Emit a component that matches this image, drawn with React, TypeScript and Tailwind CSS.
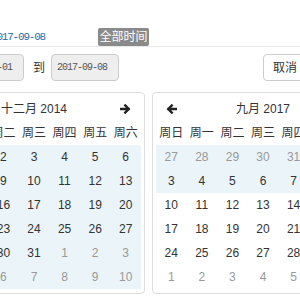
import React from 'react';

type Day = { d: number; off?: boolean; range?: boolean };

const weekdays = ['周日', '周一', '周二', '周三', '周四', '周五', '周六'];

function buildWeeks(start: number[], rangeRows: number): Day[][] {
  // start: list of 42 day numbers, off-month flagged by position
  const weeks: Day[][] = [];
  for (let r = 0; r < 6; r++) {
    weeks.push(start.slice(r * 7, r * 7 + 7).map(d => ({ d, range: r < rangeRows })));
  }
  return weeks;
}

function Arrow({ dir }: { dir: 'left' | 'right' }) {
  return (
    <svg width="11" height="10" viewBox="0 0 11 10" className={dir === 'left' ? 'rotate-180' : ''}>
      <path d="M1 5 H8.6 M5.2 1.4 L8.8 5 L5.2 8.6" stroke="#222" strokeWidth="2.3" fill="none" strokeLinecap="square" />
    </svg>
  );
}

function Calendar({ title, weeks, prev, next, offCheck }: {
  title: string;
  weeks: Day[][];
  prev?: boolean;
  next?: boolean;
  offCheck: (row: number, d: number) => boolean;
}) {
  return (
    <div className="shrink-0 w-[222px] border border-[#ddd] rounded px-[3px] py-[4px]">
      <div className="grid grid-cols-7">
        <div className="h-6 flex items-center justify-center">{prev && <Arrow dir="left" />}</div>
        <div className="col-span-5 h-6 flex items-center justify-center text-[#333]">{title}</div>
        <div className="h-6 flex items-center justify-center">{next && <Arrow dir="right" />}</div>
        {weekdays.map(w => (
          <div key={w} className="h-6 flex items-center justify-center text-[#333]">{w}</div>
        ))}
        {weeks.map((week, r) =>
          week.map((day, i) => (
            <div
              key={`${r}-${i}`}
              className={`h-6 flex items-center justify-center ${day.range ? 'bg-[#ebf4f8]' : ''} ${
                offCheck(r, day.d) ? 'text-[#999]' : 'text-[#333]'
              }`}
            >
              {day.d}
            </div>
          ))
        )}
      </div>
    </div>
  );
}

const dec2014 = [
  30, 1, 2, 3, 4, 5, 6,
  7, 8, 9, 10, 11, 12, 13,
  14, 15, 16, 17, 18, 19, 20,
  21, 22, 23, 24, 25, 26, 27,
  28, 29, 30, 31, 1, 2, 3,
  4, 5, 6, 7, 8, 9, 10,
];

const sep2017 = [
  27, 28, 29, 30, 31, 1, 2,
  3, 4, 5, 6, 7, 8, 9,
  10, 11, 12, 13, 14, 15, 16,
  17, 18, 19, 20, 21, 22, 23,
  24, 25, 26, 27, 28, 29, 30,
  1, 2, 3, 4, 5, 6, 7,
];

export default function App() {
  return (
    <div className="relative w-[300px] h-[300px] overflow-hidden bg-white text-[12px] text-[#333] font-['Liberation_Sans','Noto_Sans_CJK_SC',sans-serif]">
      <div className="h-[47px] flex items-end pb-[2px] border-b border-[#e8e8e8]">
        <span className="-ml-[9px] leading-[14px] text-[11px] tracking-[-1.2px] text-[#2a6cb0] font-['Liberation_Mono',monospace]">
          2017-09-08
        </span>
      </div>

      <div className="absolute left-[98px] top-[28px] w-[51px] h-[18px] bg-[#8a8a8a] rounded-[2px] text-white text-[12px] leading-[18px] text-center">
        全部时间
      </div>

      <div className="mt-[7px] flex items-center h-[27px]">
        <div className="shrink-0 -ml-[44px] w-[68px] h-[27px] bg-[#eee] border border-[#ccc] rounded pl-[5px] flex items-center text-[10px] tracking-[-1px] font-['Liberation_Mono',monospace] text-[#555]">
          2017-09-01
        </div>
        <span className="ml-[9px] text-[12px] text-[#333]">到</span>
        <div className="shrink-0 ml-[6px] w-[68px] h-[27px] bg-[#eee] border border-[#ccc] rounded pl-[5px] flex items-center text-[10px] tracking-[-1px] font-['Liberation_Mono',monospace] text-[#555]">
          2017-09-08
        </div>
        <button className="shrink-0 ml-auto -mr-[20px] w-[57px] h-[27px] bg-white border border-[#ccc] rounded text-[12px] text-[#333] text-left pl-[9px]">
          取消
        </button>
      </div>

      <div className="mt-[11px] flex gap-[7px] -ml-[77px]">
        <Calendar
          title="十二月 2014"
          weeks={buildWeeks(dec2014, 6)}
          next
          offCheck={(r, d) => (r === 0 && d > 20) || (r >= 4 && d < 15)}
        />
        <Calendar
          title="九月 2017"
          weeks={buildWeeks(sep2017, 2)}
          prev
          offCheck={(r, d) => (r === 0 && d > 20) || (r >= 4 && d < 15)}
        />
      </div>
    </div>
  );
}
